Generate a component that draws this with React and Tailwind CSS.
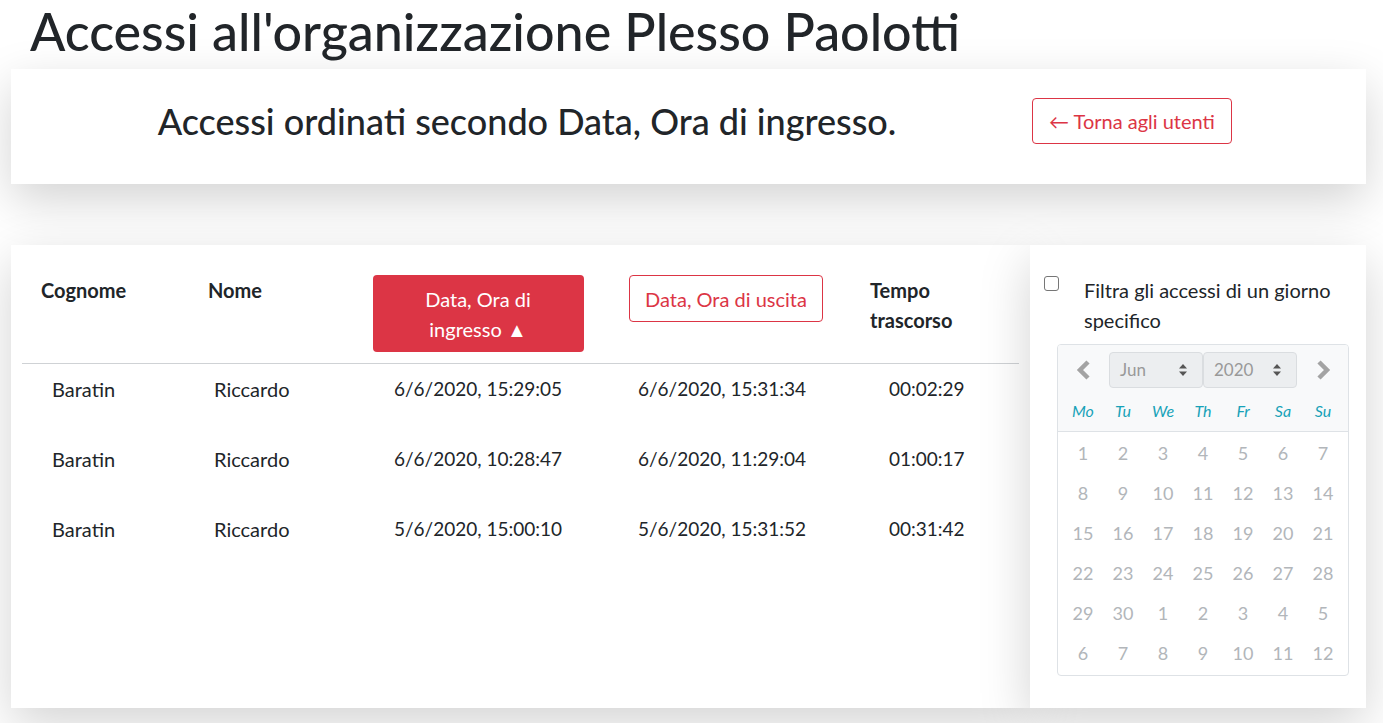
import React from "react";

const rows = [
  ["Baratin", "Riccardo", "6/6/2020, 15:29:05", "6/6/2020, 15:31:34", "00:02:29"],
  ["Baratin", "Riccardo", "6/6/2020, 10:28:47", "6/6/2020, 11:29:04", "01:00:17"],
  ["Baratin", "Riccardo", "5/6/2020, 15:00:10", "5/6/2020, 15:31:52", "00:31:42"],
];

const days = [
  1, 2, 3, 4, 5, 6, 7, 8, 9, 10, 11, 12, 13, 14, 15, 16, 17, 18, 19, 20, 21, 22, 23, 24, 25, 26, 27,
  28, 29, 30, 1, 2, 3, 4, 5, 6, 7, 8, 9, 10, 11, 12,
];

const shadow = "shadow-[0_1rem_3rem_rgba(0,0,0,0.175)]";
const cols = "grid grid-cols-[166px_162px_256px_240px_173px]";

export default function App() {
  return (
    <div
      className="min-h-[723px] bg-white text-[#212529] overflow-hidden"
      style={{ fontFamily: "Lato, 'Open Sans', sans-serif" }}
    >
      <h1 className="mb-[7px] pl-[30px] text-[52px] leading-[62px] font-medium">
        Accessi all'organizzazione Plesso Paolotti
      </h1>

      <div className={`ml-[11px] w-[1355px] h-[115px] pb-[11px] bg-white flex items-center ${shadow}`}>
        <div className="w-[1021px] pl-[11px] text-center text-[36px] leading-[44px] font-medium">
          Accessi ordinati secondo Data, Ora di ingresso.
        </div>
        <button className="h-[46px] px-[16px] rounded-[4px] border border-[#dc3545] text-[#dc3545] text-[20px] leading-[30px]">
          ← Torna agli utenti
        </button>
      </div>

      <div className="mt-[61px] ml-[11px] w-[1355px] h-[463px] flex">
        <div className={`w-[1019px] bg-white px-[11px] pt-[30px] ${shadow}`}>
          <div className={`${cols} pb-[11px] border-b border-[#cfd2d5] text-[20px] leading-[30px]`}>
            <div className="pl-[19px] font-bold">Cognome</div>
            <div className="pl-[20px] font-bold">Nome</div>
            <div className="flex justify-center">
              <button className="w-[211px] h-[77px] rounded-[4px] bg-[#dc3545] text-white">
                Data, Ora di
                <br />
                ingresso ▲
              </button>
            </div>
            <div className="flex justify-center">
              <button className="w-[194px] h-[47px] rounded-[4px] border border-[#dc3545] text-[#dc3545]">
                Data, Ora di uscita
              </button>
            </div>
            <div className="pl-[24px] font-bold">
              Tempo
              <br />
              trascorso
            </div>
          </div>
          {rows.map((r, i) => (
            <div key={i} className={`${cols} h-[70px] pt-[10px] text-[20px] leading-[30px]`}>
              <div className="pl-[30px]">{r[0]}</div>
              <div className="pl-[26px]">{r[1]}</div>
              <div className="text-center text-[19px]">{r[2]}</div>
              <div className="text-center text-[19px] pr-[8px]">{r[3]}</div>
              <div className="pl-[43px] text-[19px]">{r[4]}</div>
            </div>
          ))}
        </div>

        <div className={`relative z-10 w-[336px] bg-white pt-[30px] ${shadow}`}>
          <div className="flex items-start pl-[14px]">
            <span className="mt-[1px] w-[15px] h-[15px] rounded-[3px] border border-[#767676] bg-white shrink-0" />
            <div className="ml-[25px] text-[20px] leading-[30px]">
              Filtra gli accessi di un giorno
              <br />
              specifico
            </div>
          </div>

          <div className="mt-[9px] ml-[27px] w-[292px] rounded-[4px] border border-[#dee2e6] overflow-hidden">
            <div className="bg-[#f8f9fa] pt-[7px] border-b border-[#dee2e6]">
              <div className="flex items-center h-[36px]">
                <div className="w-[51px] flex justify-center">
                  <svg width="18" height="22" viewBox="0 0 18 22">
                    <polyline points="13,3 5,11 13,19" fill="none" stroke="#a3a3a3" strokeWidth="4.5" />
                  </svg>
                </div>
                <Select value="Jun" />
                <Select value="2020" />
                <div className="flex-1 flex justify-center">
                  <svg width="18" height="22" viewBox="0 0 18 22">
                    <polyline points="5,3 13,11 5,19" fill="none" stroke="#a3a3a3" strokeWidth="4.5" />
                  </svg>
                </div>
              </div>
              <div className="grid grid-cols-7 px-[5px] mt-[3px] h-[40px] items-center text-[16px] italic text-[#17a2b8]">
                {["Mo", "Tu", "We", "Th", "Fr", "Sa", "Su"].map((d) => (
                  <div key={d} className="text-center">
                    {d}
                  </div>
                ))}
              </div>
            </div>
            <div className="grid grid-cols-7 px-[5px] pt-[1px] pb-[2px] text-[18px] text-[#b2b6ba]">
              {days.map((d, i) => (
                <div key={i} className="h-[40px] flex items-center justify-center">
                  {d}
                </div>
              ))}
            </div>
          </div>
        </div>
      </div>
    </div>
  );
}

function Select({ value }) {
  return (
    <div className="w-[94px] h-[36px] shrink-0 rounded-[4px] border border-[#dadde0] bg-[#eceef0] flex items-center justify-between pl-[10px] pr-[14px] text-[17px] text-[#999]">
      <span>{value}</span>
      <svg width="10" height="14" viewBox="0 0 10 14">
        <polygon points="5,1 9,5.5 1,5.5" fill="#555" />
        <polygon points="5,13 9,8.5 1,8.5" fill="#555" />
      </svg>
    </div>
  );
}
